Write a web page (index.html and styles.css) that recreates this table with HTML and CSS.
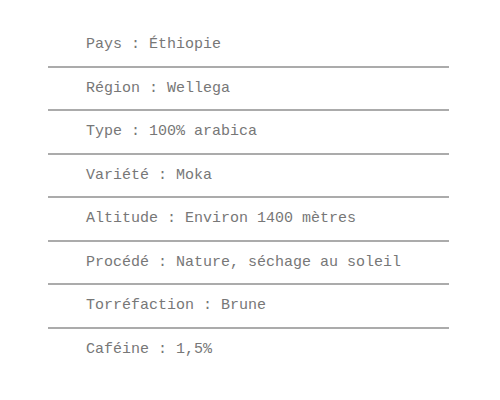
FILE: index.html
```html
<!DOCTYPE html>
<html lang="fr">
<head>
<meta charset="utf-8">
<link rel="stylesheet" href="styles.css">
</head>
<body>
<ul class="specs">
  <li class="spec">Pays : Éthiopie</li>
  <li class="spec">Région : Wellega</li>
  <li class="spec">Type : 100% arabica</li>
  <li class="spec">Variété : Moka</li>
  <li class="spec">Altitude : Environ 1400 mètres</li>
  <li class="spec">Procédé : Nature, séchage au soleil</li>
  <li class="spec">Torréfaction : Brune</li>
  <li class="spec">Caféine : 1,5%</li>
</ul>
</body>
</html>
```
FILE: styles.css
```css
html, body {
  margin: 0;
  padding: 0;
  background: #fff;
}
.specs {
  list-style: none;
  margin: 24px 0 0 48px;
  padding: 0;
  width: 401px;
  display: flex;
  flex-direction: column;
}
.spec {
  font-family: "Liberation Mono", "Courier New", monospace;
  font-size: 15px;
  line-height: 17px;
  color: #777;
  padding: 12px 0 12.5px 38px;
  border-bottom: 2px solid #ababab;
}
.spec:last-child {
  border-bottom: none;
}
```
